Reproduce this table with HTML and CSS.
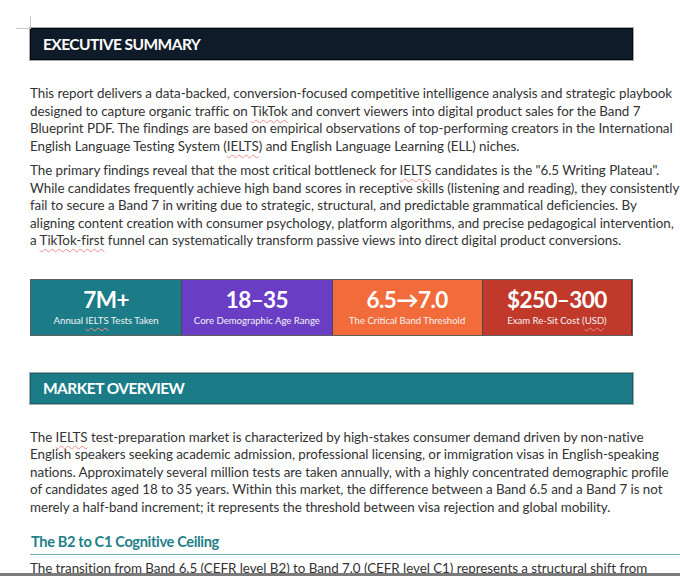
FILE: index.html
```html
<!DOCTYPE html>
<html lang="en">
<head>
<meta charset="utf-8">
<title>Executive Summary</title>
<link rel="stylesheet" href="styles.css">
</head>
<body>
<main class="page">
  <h1 class="band band-dark">EXECUTIVE SUMMARY</h1>

  <p class="body-text first">This report delivers a data-backed, conversion-focused competitive intelligence analysis and strategic playbook<br>designed to capture organic traffic on <span class="sp">TikTok</span> and convert viewers into digital product sales for the Band 7<br>Blueprint PDF. The findings are based on empirical observations of top-performing creators in the International<br>English Language Testing System (<span class="sp">IELTS</span>) and English Language Learning (ELL) niches.</p>

  <p class="body-text">The primary findings reveal that the most critical bottleneck for <span class="sp">IELTS</span> candidates is the "6.5 Writing Plateau".<br>While candidates frequently achieve high band scores in receptive skills (listening and reading), they consistently<br>fail to secure a Band 7 in writing due to strategic, structural, and predictable grammatical deficiencies. By<br>aligning content creation with consumer psychology, platform algorithms, and precise pedagogical intervention,<br>a <span class="sp">TikTok-first</span> funnel can systematically transform passive views into direct digital product conversions.</p>

  <section class="stats">
    <div class="stat stat-teal">
      <div class="stat-num">7M+</div>
      <div class="stat-label">Annual <span class="sp">IELTS</span> Tests Taken</div>
    </div>
    <div class="stat stat-purple">
      <div class="stat-num">18–35</div>
      <div class="stat-label">Core Demographic Age Range</div>
    </div>
    <div class="stat stat-orange">
      <div class="stat-num">6.5→7.0</div>
      <div class="stat-label">The Critical Band Threshold</div>
    </div>
    <div class="stat stat-red">
      <div class="stat-num">$250–300</div>
      <div class="stat-label">Exam Re-Sit Cost (<span class="sp">USD</span>)</div>
    </div>
  </section>

  <h1 class="band band-teal">MARKET OVERVIEW</h1>

  <p class="body-text first">The <span class="sp">IELTS</span> test-preparation market is characterized by high-stakes consumer demand driven by non-native<br>English speakers seeking academic admission, professional licensing, or immigration visas in English-speaking<br>nations. Approximately several million tests are taken annually, with a highly concentrated demographic profile<br>of candidates aged 18 to 35 years. Within this market, the difference between a Band 6.5 and a Band 7 is not<br>merely a half-band increment; it represents the threshold between visa rejection and global mobility.</p>

  <h2 class="subhead">The B2 to C1 Cognitive Ceiling</h2>

  <p class="body-text tail">The transition from Band 6.5 (<span class="sp">CEFR</span> level B2) to Band 7.0 (<span class="sp">CEFR</span> level C1) represents a structural shift from</p>
</main>
</body>
</html>
```

FILE: styles.css
```css
html, body {
  margin: 0;
  padding: 0;
  background: #ffffff;
}

body {
  width: 680px;
  height: 576px;
  overflow: hidden;
  font-family: Lato, "Open Sans", "Liberation Sans", sans-serif;
}

.page {
  position: relative;
  padding: 28px 0 0 30px;
  display: flex;
  flex-direction: column;
  align-items: flex-start;
}

/* crop mark in top-left margin */
.page::before {
  content: "";
  position: absolute;
  left: 16px;
  top: 16px;
  width: 14px;
  height: 12px;
  border-right: 1px solid #c9c9c9;
  border-bottom: 1px solid #c9c9c9;
}

/* window bottom edge */
.page::after {
  content: "";
  position: fixed;
  left: 0;
  right: 0;
  bottom: 0;
  height: 3px;
  background: #7c7c7c;
}

.band {
  box-sizing: border-box;
  width: 603px;
  height: 32px;
  margin: 0;
  padding: 0 0 0 12px;
  display: flex;
  align-items: center;
  font-size: 15.5px;
  font-weight: 700;
  color: #ffffff;
  letter-spacing: -0.55px;
  box-shadow: 0 0 0 1px #a9a9a9;
}

.band-dark {
  background: #101b2a;
  border: 1px solid #05080d;
}

.band-teal {
  background: #1b7c87;
  border: 1px solid #15636c;
  margin-top: 37px;
  height: 31px;
}

.body-text {
  margin: 7px 0 0 0;
  font-size: 13.4px;
  line-height: 17.5px;
  color: #333333;
  white-space: nowrap;
  letter-spacing: -0.05px;
}

.body-text.first {
  margin-top: 25px;
}

.sp {
  text-decoration: underline wavy #ec8a8c;
  text-decoration-thickness: 1px;
  text-underline-offset: 2.5px;
  text-decoration-skip-ink: none;
}

.stats {
  margin-top: 29px;
  width: 603px;
  height: 57px;
  display: grid;
  grid-template-columns: repeat(4, 1fr);
  box-sizing: border-box;
  border: 1px solid #5d5d5d;
}

.stat {
  display: flex;
  flex-direction: column;
  align-items: center;
  justify-content: center;
  color: #ffffff;
  box-sizing: border-box;
}

.stat + .stat {
  border-left: 1px solid #4a4a4a;
}

.stat-num {
  font-size: 22.5px;
  font-weight: 700;
  line-height: 24px;
  letter-spacing: -0.6px;
}

.stat-label {
  font-size: 9.6px;
  line-height: 13px;
  margin-top: 2px;
  color: #f3f3f3;
}

.stat-teal { background: #1b7c87; }
.stat-purple { background: #6a3dc5; }
.stat-orange { background: #f26b3a; }
.stat-red { background: #c0392b; border-right: 1px solid #8e1f14; }

.subhead {
  box-sizing: border-box;
  width: 660px;
  margin: 17px 0 0 0;
  padding: 0 0 3px 1px;
  font-size: 14.6px;
  line-height: 18px;
  font-weight: 700;
  color: #1e7f89;
  border-bottom: 1px solid #68afb6;
  letter-spacing: -0.35px;
}

.body-text.tail {
  margin-top: 5px;
}
```
